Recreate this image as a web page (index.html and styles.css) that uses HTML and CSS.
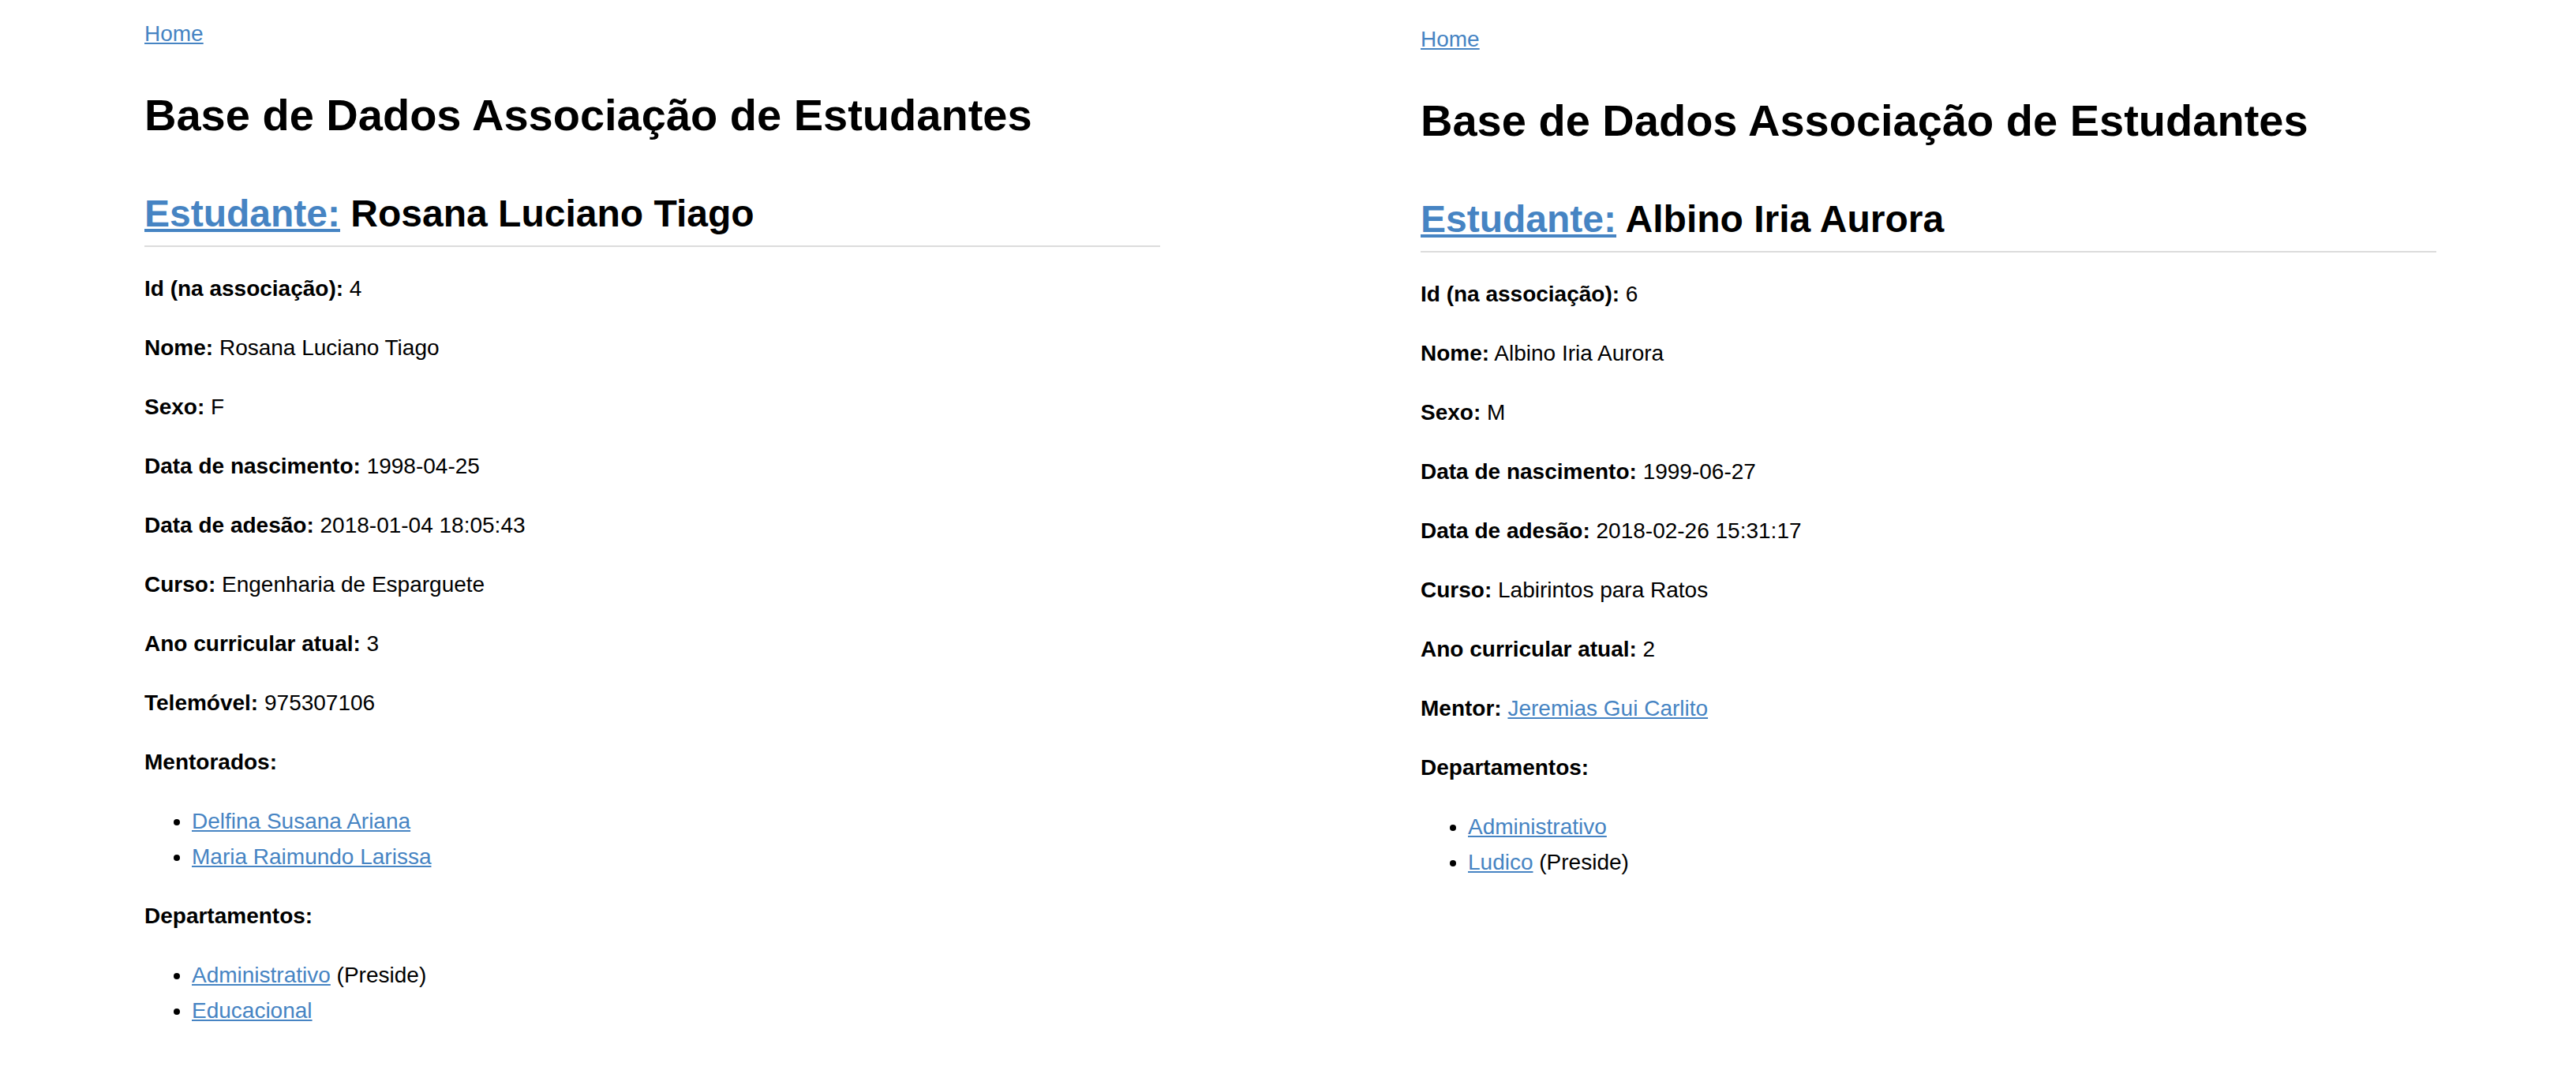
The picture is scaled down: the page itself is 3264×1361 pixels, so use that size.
FILE: index.html
```html
<!DOCTYPE html>
<html lang="pt">
<head>
<meta charset="utf-8">
<title>Base de Dados Associação de Estudantes</title>
<link rel="stylesheet" href="styles.css">
</head>
<body>
<div class="page">
  <section class="panel panel-left">
    <div class="nav"><a href="#">Home</a></div>
    <h1 class="title">Base de Dados Associação de Estudantes</h1>
    <h2 class="subtitle"><a href="#">Estudante:</a> Rosana Luciano Tiago</h2>
    <p class="field"><b>Id (na associação):</b> 4</p>
    <p class="field"><b>Nome:</b> Rosana Luciano Tiago</p>
    <p class="field"><b>Sexo:</b> F</p>
    <p class="field"><b>Data de nascimento:</b> 1998-04-25</p>
    <p class="field"><b>Data de adesão:</b> 2018-01-04 18:05:43</p>
    <p class="field"><b>Curso:</b> Engenharia de Esparguete</p>
    <p class="field"><b>Ano curricular atual:</b> 3</p>
    <p class="field"><b>Telemóvel:</b> 975307106</p>
    <p class="field"><b>Mentorados:</b></p>
    <ul class="list">
      <li><a href="#">Delfina Susana Ariana</a></li>
      <li><a href="#">Maria Raimundo Larissa</a></li>
    </ul>
    <p class="field"><b>Departamentos:</b></p>
    <ul class="list">
      <li><a href="#">Administrativo</a> (Preside)</li>
      <li><a href="#">Educacional</a></li>
    </ul>
  </section>
  <section class="panel panel-right">
    <div class="nav"><a href="#">Home</a></div>
    <h1 class="title">Base de Dados Associação de Estudantes</h1>
    <h2 class="subtitle"><a href="#">Estudante:</a> Albino Iria Aurora</h2>
    <p class="field"><b>Id (na associação):</b> 6</p>
    <p class="field"><b>Nome:</b> Albino Iria Aurora</p>
    <p class="field"><b>Sexo:</b> M</p>
    <p class="field"><b>Data de nascimento:</b> 1999-06-27</p>
    <p class="field"><b>Data de adesão:</b> 2018-02-26 15:31:17</p>
    <p class="field"><b>Curso:</b> Labirintos para Ratos</p>
    <p class="field"><b>Ano curricular atual:</b> 2</p>
    <p class="field"><b>Mentor:</b> <a href="#">Jeremias Gui Carlito</a></p>
    <p class="field"><b>Departamentos:</b></p>
    <ul class="list">
      <li><a href="#">Administrativo</a></li>
      <li><a href="#">Ludico</a> (Preside)</li>
    </ul>
  </section>
</div>
</body>
</html>
```

FILE: styles.css
```css
html, body {
  margin: 0;
  padding: 0;
  background: #fff;
}

body {
  font-family: "Liberation Sans", Arial, Helvetica, sans-serif;
  font-size: 28px;
  line-height: 45px;
  color: #000;
}

a {
  color: #4684c3;
  text-decoration: underline;
}

.page {
  display: flex;
  gap: 330px;
  padding-left: 183px;
}

.panel {
  width: 1287px;
  flex: 0 0 1287px;
}

.panel-left {
  padding-top: 20px;
}

.panel-right {
  padding-top: 27px;
}

.nav {
  line-height: 45px;
}

.title {
  margin: 47px 0 0;
  font-size: 56px;
  line-height: 67px;
  font-weight: bold;
}

.subtitle {
  margin: 67px 0 0;
  font-size: 48px;
  line-height: 50px;
  font-weight: bold;
  padding-bottom: 15px;
  border-bottom: 2px solid #dcdcdc;
}

.field {
  margin: 30px 0 0;
}

.list {
  margin: 30px 0 0;
  padding-left: 60px;
}
```
